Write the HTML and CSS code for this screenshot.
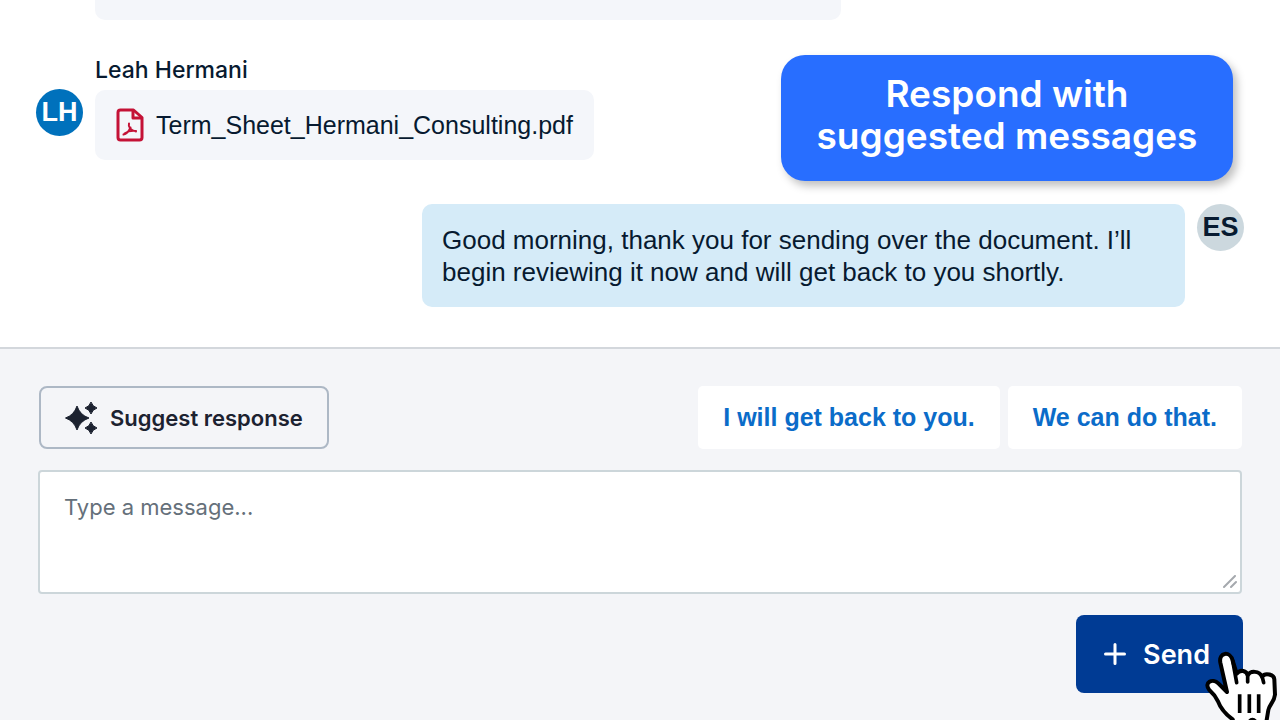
FILE: index.html
```html
<!DOCTYPE html>
<html lang="en">
<head>
  <meta charset="UTF-8" />
  <meta name="viewport" content="width=device-width, initial-scale=1.0" />
  <title>Messages</title>
  <link rel="stylesheet" href="styles.css">
</head>
<body>
  <main class="chat">
    <div class="bubble bubble-previous"></div>

    <div class="message received">
      <div class="avatar avatar-lh">LH</div>
      <div class="message-body">
        <div class="sender">Leah Hermani</div>
        <a class="bubble file" href="#">
          <svg class="file-icon" viewBox="0 0 28 34" fill="none" stroke="#c41236" stroke-width="3" stroke-linejoin="round" stroke-linecap="round">
            <path d="M4.500 2H17.500L26 9.500V29.500Q26 32 23.500 32H4.500Q2 32 2 29.500V4.500Q2 2 4.500 2Z"/>
            <path d="M17 3V10H25" stroke-linecap="butt"/>
            <path d="M13 15.500C12 19 14.500 22.500 20 23.500M14.500 19.500C13 23 11 26 7.500 26.500M8.500 25.500C12 23 16 22.500 20 23" stroke-width="2"/>
          </svg>
          <span>Term_Sheet_Hermani_Consulting.pdf</span>
        </a>
      </div>
    </div>

    <div class="message sent">
      <p class="bubble reply">Good morning, thank you for sending over the document. I’ll begin reviewing it now and will get back to you shortly.</p>
      <div class="avatar avatar-es">ES</div>
    </div>

    <div class="callout">Respond with<br>suggested messages</div>
  </main>

  <form class="composer">
    <div class="suggestions">
      <button type="button" class="suggest-btn">
        <svg class="sparkle-icon" viewBox="0 0 34 34" fill="#1c2230" stroke="#1c2230" stroke-width="1" stroke-linejoin="round">
          <path d="M12 5Q15 14 24 17Q15 20 12 29Q9 20 0.500 17Q9 14 12 5Z"/>
          <path d="M26 1Q27.500 5.500 32 7Q27.500 8.500 26 13Q24.500 8.500 20 7Q24.500 5.500 26 1Z"/>
          <path d="M26 21Q27.500 25.500 32 27Q27.500 28.500 26 33Q24.500 28.500 20 27Q24.500 25.500 26 21Z"/>
        </svg>
        <span>Suggest response</span>
      </button>
      <div class="quick-replies">
        <button type="button" class="quick-reply">I will get back to you.</button>
        <button type="button" class="quick-reply">We can do that.</button>
      </div>
    </div>

    <div class="input-block">
      <textarea id="message" aria-label="Message" placeholder="Type a message..."></textarea>
      <svg class="grip" viewBox="0 0 14 14" stroke="#a5a9ae" stroke-width="2" stroke-linecap="round">
        <path d="M1 12L12 1M8 12L13 7"/>
      </svg>
    </div>

    <div class="send-row">
      <button type="submit" class="send-btn">
        <svg class="plus-icon" viewBox="0 0 22 22" stroke="#fff" stroke-width="3" stroke-linecap="round">
          <path d="M11 1.500V20.500M1.500 11H20.500"/>
        </svg>
        <span>Send</span>
      </button>
      <svg class="cursor" viewBox="0 0 255 270" fill="#fff" stroke="#000" stroke-width="12" stroke-linecap="round" stroke-linejoin="round">
        <path d="M96 156L76 68C70 36 106 32 113 62L125 101C136 87 155 92 158 106C166 91 193 92 201 110C211 96 237 104 238 118L240 164C238 186 223 194 220 210L211 264H121L113 238Q80 214 69 184Q60 165 43 150C25 127 53 114 70 130Z"/>
        <path d="M113 62L125 128M158 106V126M201 108L206 128" fill="none" stroke-width="11"/>
        <path d="M134 163V219M163 163V219M191 163V219" stroke-width="11" stroke-linecap="butt"/>
        <path d="M164 244Q172 234 181 244" fill="none"/>
      </svg>
    </div>
  </form>
</body>
</html>
```

FILE: styles.css
```css
:root {
  --navy: #071a30;
  --bg-bubble: #f4f6fa;
  --bg-reply: #d5ebf8;
  --bg-composer: #f4f5f8;
  --border: #ccd6da;
  --link: #0b6cc9;
  --primary: #003b94;
}

* { box-sizing: border-box; }
body {
  margin: 0;
  min-height: 100vh;
  display: flex;
  flex-direction: column;
  font-family: "Liberation Sans", Arial, sans-serif;
  background: #fff;
  color: var(--navy);
}
button, textarea { font-family: inherit; }
svg { display: block; flex: none; }

.chat {
  position: relative;
  padding: 0 36px 40px;
}

.bubble {
  background: var(--bg-bubble);
  border-radius: 10px;
}
.bubble-previous {
  max-width: 746px;
  height: 20px;
  margin-left: 59px;
  border-radius: 0 0 10px 10px;
}

.message { display: flex; gap: 12px; }
.received { margin-top: 35px; }
.sent { margin-top: 44px; justify-content: flex-end; }

.avatar {
  flex: none;
  width: 47px;
  height: 47px;
  border-radius: 50%;
  display: flex;
  align-items: center;
  justify-content: center;
  font-size: 27px;
  font-weight: 700;
}
.avatar-lh { margin-top: 34px; background: #0071bc; color: #fff; }
.avatar-es { background: #ccd8de; }

.sender {
  font-family: Inter, sans-serif;
  font-size: 23px;
  font-weight: 500;
  line-height: 30px;
  margin-bottom: 5px;
}

.file {
  display: flex;
  align-items: center;
  gap: 12px;
  height: 70px;
  padding: 0 21px;
  font-size: 25px;
  color: inherit;
  text-decoration: none;
}
.file-icon { width: 28px; height: 34px; }

.reply {
  max-width: 763px;
  margin: 0;
  padding: 20px;
  padding-bottom: 19px;
  background: var(--bg-reply);
  font-size: 26px;
  line-height: 32px;
}

.callout {
  position: absolute;
  top: 55px;
  right: 47px;
  width: 452px;
  padding: 18px 0 24px;
  border-radius: 24px;
  background: #286eff;
  box-shadow: 4px 5px 8px rgba(0, 0, 0, 0.25);
  color: #fff;
  font-family: Inter, sans-serif;
  font-size: 37px;
  font-weight: 600;
  line-height: 42px;
  text-align: center;
}

.composer {
  flex: 1;
  padding: 37px 38px 26px;
  border-top: 2px solid #d3d7dc;
  background: var(--bg-composer);
  overflow: hidden;
}

.suggestions {
  display: flex;
  justify-content: space-between;
  margin-bottom: 21px;
}
.suggest-btn {
  display: flex;
  align-items: center;
  gap: 11px;
  height: 63px;
  margin-left: 1px;
  padding: 0 24px;
  border: 2px solid #adb8c5;
  border-radius: 8px;
  background: transparent;
  color: #1c2230;
  font-family: Inter, sans-serif;
  font-size: 22px;
  font-weight: 600;
}
.sparkle-icon { width: 34px; height: 34px; }

.quick-replies { display: flex; gap: 8px; }
.quick-reply {
  height: 63px;
  padding: 0 25px;
  border: none;
  border-radius: 5px;
  background: #fff;
  color: var(--link);
  font-size: 25px;
  font-weight: 700;
}

.input-block { position: relative; margin-bottom: 21px; }
.input-block textarea {
  display: block;
  width: 100%;
  height: 124px;
  padding: 20px 24px;
  border: 2px solid var(--border);
  border-radius: 4px;
  background: #fff;
  color: var(--navy);
  font-family: Inter, sans-serif;
  font-size: 22px;
  line-height: 30px;
  resize: none;
}
.input-block textarea::placeholder { color: #65707a; }
.grip {
  position: absolute;
  right: 5px;
  bottom: 5px;
  width: 14px;
  height: 14px;
}

.send-row {
  position: relative;
  display: flex;
  justify-content: flex-end;
  margin-right: -1px;
}
.send-btn {
  display: flex;
  align-items: center;
  gap: 17px;
  height: 78px;
  padding: 0 33px 0 28px;
  border: none;
  border-radius: 8px;
  background: var(--primary);
  color: #fff;
  font-family: Inter, sans-serif;
  font-size: 27px;
  font-weight: 600;
}
.plus-icon { width: 22px; height: 22px; }

/* pointer over the send button */
.cursor {
  position: absolute;
  top: 25px;
  right: -37px;
  width: 85px;
  height: 90px;
}
```
